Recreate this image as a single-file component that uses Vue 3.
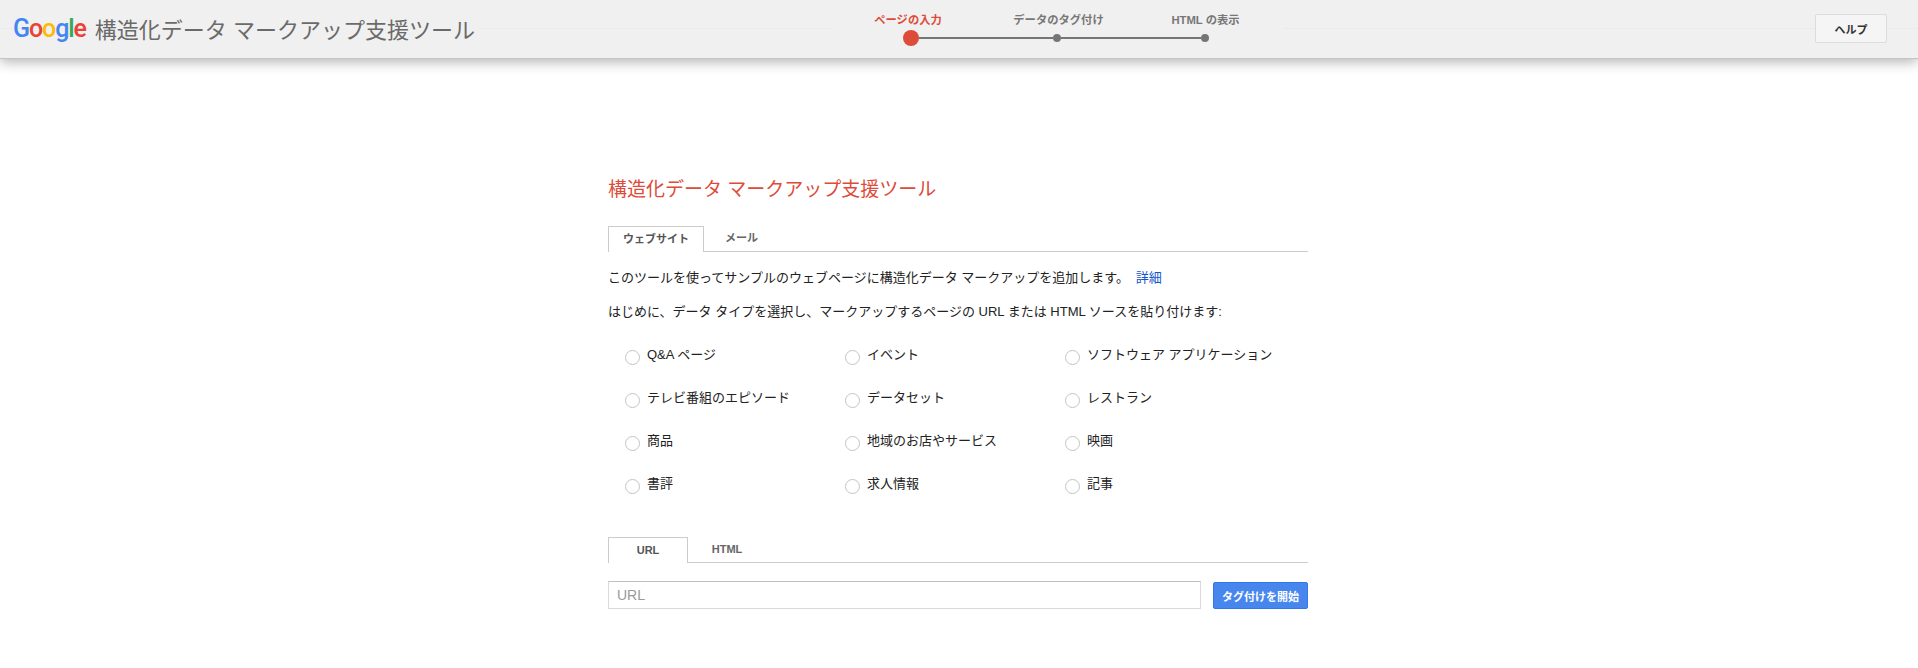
<template>
  <div class="page">
    <header class="topbar">
      <div class="brand">
        <span class="logo"><span class="blue">G</span><span class="red">o</span><span class="yellow">o</span><span class="blue">g</span><span class="green">l</span><span class="red">e</span></span>
        <span class="app-title">構造化データ マークアップ支援ツール</span>
      </div>
      <div class="stepper">
        <div class="step-labels">
          <span v-for="(s, i) in steps" :key="s" class="step-label" :class="{ active: i === 0 }">{{ s }}</span>
        </div>
        <div class="step-track">
          <span class="dot dot-active"></span>
          <span class="track-line first"></span>
          <span class="dot"></span>
          <span class="track-line"></span>
          <span class="dot"></span>
        </div>
      </div>
      <button class="btn-help">ヘルプ</button>
    </header>

    <main class="content">
      <h1 class="heading">構造化データ マークアップ支援ツール</h1>

      <div class="tabs">
        <div class="tab tab-active">ウェブサイト</div>
        <div class="tab">メール</div>
      </div>

      <p class="intro">このツールを使ってサンプルのウェブページに構造化データ マークアップを追加します。 <a class="more">詳細</a></p>
      <p class="intro second">はじめに、データ タイプを選択し、マークアップするページの URL または HTML ソースを貼り付けます:</p>

      <div class="types">
        <label v-for="t in types" :key="t" class="type">
          <span class="radio"></span>
          <span class="type-name">{{ t }}</span>
        </label>
      </div>

      <div class="tabs tabs-source">
        <div class="tab tab-active">URL</div>
        <div class="tab">HTML</div>
      </div>

      <div class="url-row">
        <input class="url-input" type="text" placeholder="URL" />
        <button class="btn-start">タグ付けを開始</button>
      </div>
    </main>
  </div>
</template>

<script setup>
const steps = ['ページの入力', 'データのタグ付け', 'HTML の表示']

const types = [
  'Q&A ページ',
  'イベント',
  'ソフトウェア アプリケーション',
  'テレビ番組のエピソード',
  'データセット',
  'レストラン',
  '商品',
  '地域のお店やサービス',
  '映画',
  '書評',
  '求人情報',
  '記事',
]
</script>

<style>
html,
body {
  margin: 0;
  background: #fff;
}
</style>

<style scoped>
.page {
  height: 668px;
  overflow: hidden;
  font-family: "Liberation Sans", "Noto Sans CJK JP", sans-serif;
  color: #222;
}

.topbar {
  position: relative;
  display: flex;
  align-items: flex-start;
  height: 59px;
  box-sizing: border-box;
  background: #f0f0f0;
  border-bottom: 1px solid #c4c4c4;
  box-shadow: 0 3px 12px rgba(0, 0, 0, 0.3);
}

.topbar::before {
  content: "";
  position: absolute;
  left: 0;
  right: 0;
  top: 28px;
  height: 1px;
  background: linear-gradient(to right, #ebebeb 833px, #f0f0f0 833px, #f0f0f0 1283px, #ebebeb 1283px);
}

.brand {
  position: relative;
  display: flex;
  align-items: center;
  gap: 9px;
  width: 838px;
  height: 55px;
  box-sizing: border-box;
  padding-left: 13px;
}

.logo {
  font-family: Roboto, sans-serif;
  font-size: 25px;
  font-weight: 500;
  line-height: 30px;
  letter-spacing: -1.1px;
  margin-top: 3px;
}

.blue { color: #4285f4; }
.red { color: #ea4335; }
.yellow { color: #fbbc05; }
.green { color: #34a853; }

.app-title {
  font-size: 22px;
  color: #6a6a6a;
  white-space: nowrap;
  background: #f0f0f0;
  padding-right: 4px;
}

.stepper {
  position: relative;
  width: 441px;
  padding-top: 13px;
}

.step-labels {
  display: grid;
  grid-template-columns: repeat(3, 147px);
  justify-items: center;
  font-size: 11.3px;
  font-weight: 700;
  line-height: 14px;
  color: #777;
}

.step-label {
  white-space: nowrap;
}

.step-label.active {
  color: #dd4b39;
  margin-right: 7px;
}

.step-track {
  display: flex;
  align-items: center;
  height: 16px;
  margin: 3px 70px 0 65px;
}

.track-line {
  flex: 1;
  height: 2px;
  background: #757575;
}

.track-line.first {
  flex: none;
  width: 134px;
}

.dot {
  flex: none;
  width: 8px;
  height: 8px;
  border-radius: 50%;
  background: #757575;
}

.dot-active {
  width: 16px;
  height: 16px;
  background: #dd4b39;
}

.btn-help {
  position: relative;
  margin: 14px 31px 0 auto;
  width: 72px;
  height: 29px;
  padding: 0;
  background: #f5f5f5;
  border: 1px solid #dcdcdc;
  border-radius: 2px;
  font-family: inherit;
  font-size: 11px;
  font-weight: 700;
  color: #333;
}

.content {
  width: 700px;
  margin-left: 608px;
  padding-top: 117px;
}

.heading {
  margin: 0;
  font-size: 19px;
  font-weight: 400;
  line-height: 28px;
  color: #dd4b39;
  white-space: nowrap;
}

.tabs {
  display: flex;
  height: 25px;
  margin-top: 22px;
  border-bottom: 1px solid #ccc;
}

.tab {
  box-sizing: border-box;
  height: 25px;
  padding: 0 15px;
  font-size: 11px;
  font-weight: 700;
  line-height: 24px;
  color: #666;
}

.tab-active {
  height: 26px;
  padding: 0 14px;
  margin-right: 6px;
  background: #fff;
  border: 1px solid #ccc;
  border-bottom: none;
  color: #555;
}

.intro {
  margin: 16px 0 0;
  font-size: 13px;
  line-height: 20px;
  white-space: nowrap;
  color: #222;
}

.second {
  margin-top: 14px;
}

.more {
  color: #15c;
  margin-left: 3px;
}

.types {
  display: grid;
  grid-template-columns: repeat(3, 220px);
  grid-auto-rows: 43px;
  align-items: center;
  margin: 13px 0 0 17px;
}

.type {
  display: flex;
  align-items: center;
  gap: 7px;
  height: 30px;
}

.radio {
  flex: none;
  width: 15px;
  height: 15px;
  box-sizing: border-box;
  margin-top: 2px;
  border: 1px solid #c4c4c4;
  border-radius: 50%;
}

.type-name {
  font-size: 13px;
  line-height: 18px;
  margin-top: -3px;
  white-space: nowrap;
}

.tabs-source {
  margin-top: 30px;
}

.tabs-source .tab {
  padding: 0;
  width: 80px;
  text-align: center;
  line-height: 25px;
  margin-right: 0;
}

.tabs-source .tab:last-child {
  width: 78px;
}

.url-row {
  display: flex;
  align-items: flex-start;
  gap: 12px;
  margin-top: 18px;
}

.url-input {
  box-sizing: border-box;
  width: 593px;
  height: 28px;
  padding: 0 8px;
  background: #fff;
  border: 1px solid #d9d9d9;
  border-top-color: #c0c0c0;
  border-radius: 0;
  font-family: inherit;
  font-size: 14px;
  outline: none;
}

.url-input::placeholder {
  color: #999;
}

.btn-start {
  width: 95px;
  height: 27px;
  margin-top: 1px;
  padding: 0;
  background: #4787ed;
  border: 1px solid #3079ed;
  border-radius: 2px;
  font-family: inherit;
  font-size: 11px;
  font-weight: 700;
  color: #fff;
}
</style>
